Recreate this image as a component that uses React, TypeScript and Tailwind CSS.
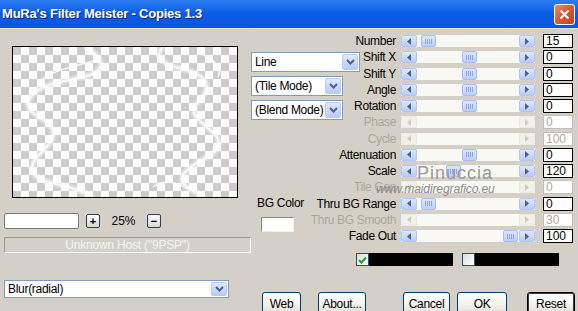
import React from "react";

const FONT = "font-['Liberation_Sans',Arial,sans-serif]";

function Chevron() {
  return (
    <svg width="9" height="6" viewBox="0 0 9 6">
      <path d="M1 1 L4.5 4.5 L8 1" fill="none" stroke="#4d6185" strokeWidth="2" />
    </svg>
  );
}

function Dropdown({ text, w, h = 20 }: { text: string; w: string; h?: number }) {
  return (
    <div
      className={`flex ${w} ${h === 20 ? "h-[20px]" : "h-[18px]"} items-center border border-[#7f9db9] bg-white pl-[3px] pr-[1px]`}
    >
      <span className="text-[12px] tracking-[-0.3px] text-black">{text}</span>
      <div
        className={`ml-auto flex ${h === 20 ? "h-[16px]" : "h-[14px]"} w-[16px] items-center justify-center rounded-[2px] border border-[#b9cbf3] bg-linear-to-b from-[#e0e9fe] to-[#b8cbf8]`}
      >
        <Chevron />
      </div>
    </div>
  );
}

function Arrow({ dir, disabled }: { dir: "l" | "r"; disabled?: boolean }) {
  return (
    <div
      className={`flex h-[12px] w-[16px] items-center justify-center rounded-[2px] border ${
        disabled
          ? "border-[#ebe9e0] bg-[#f1f0ea]"
          : "border-[#b3c6f3] bg-linear-to-b from-[#dde7fe] to-[#b9ccf9]"
      }`}
    >
      <svg width="4" height="7" viewBox="0 0 4 7">
        <path
          d={dir === "l" ? "M4 0 L0 3.5 L4 7Z" : "M0 0 L4 3.5 L0 7Z"}
          fill={disabled ? "#cfcdc2" : "#4d6185"}
        />
      </svg>
    </div>
  );
}

function Thumb() {
  return (
    <div className="flex h-[12px] w-[15px] items-center justify-center gap-[1px] rounded-[2px] border border-[#a9bdf1] bg-linear-to-b from-[#dbe5fe] to-[#bccffb]">
      <div className="h-[5px] w-px bg-[#8ea8e6]" />
      <div className="h-[5px] w-px bg-[#8ea8e6]" />
      <div className="h-[5px] w-px bg-[#8ea8e6]" />
      <div className="h-[5px] w-px bg-[#8ea8e6]" />
    </div>
  );
}

type RowProps = { label: string; value: string; thumb?: number; disabled?: boolean };

function SliderRow({ label, value, thumb, disabled }: RowProps) {
  return (
    <div className="flex h-[16.25px] items-center">
      <div
        className={`flex w-[36px] justify-end whitespace-nowrap text-[12px] tracking-[-0.35px] ${
          disabled ? "text-[#aca899]" : "text-black"
        }`}
      >
        {label}
      </div>
      <div className="relative ml-[5px] flex h-[12px] w-[134px] justify-between bg-[#f8f8f4]">
        <Arrow dir="l" disabled={disabled} />
        {thumb !== undefined && (
          <div className="absolute top-0" style={{ left: thumb }}>
            <Thumb />
          </div>
        )}
        <Arrow dir="r" disabled={disabled} />
      </div>
      <div
        className={`ml-[8px] flex h-[14px] w-[30px] items-center border bg-white pl-[2px] text-[12px] leading-[12px] ${
          disabled ? "border-[#c2bfb3] text-[#aca899]" : "border-black text-black"
        }`}
      >
        {value}
      </div>
    </div>
  );
}

function XPButton({ label, w, def }: { label: string; w: string; def?: boolean }) {
  return (
    <div
      className={`flex h-[23px] ${w} items-center justify-center rounded-[3px] border ${
        def ? "border-black shadow-[inset_0_0_0_1px_#3a3a3a]" : "border-[#003c74]"
      } bg-linear-to-b from-[#ffffff] via-[#f4f4f0] to-[#dedcd3] text-[12px] tracking-[-0.3px] text-black`}
    >
      {label}
    </div>
  );
}

function SmallBtn({ sym }: { sym: string }) {
  return (
    <div className="flex h-[14px] w-[14px] items-center justify-center rounded-[2px] border border-[#2a3f63] bg-linear-to-b from-[#ffffff] to-[#d8d7cf] text-[11px] font-bold leading-none text-black">
      {sym}
    </div>
  );
}

function Check({ checked }: { checked?: boolean }) {
  return (
    <div className="flex h-[13px] w-[13px] items-center justify-center border border-[#1c5180] bg-linear-to-br from-[#dcdcd6] to-[#ffffff]">
      {checked && (
        <svg width="9" height="8" viewBox="0 0 9 8">
          <path d="M1 4 L3.5 6.5 L8 1.5" fill="none" stroke="#21a121" strokeWidth="2" />
        </svg>
      )}
    </div>
  );
}

export default function App() {
  const rows: RowProps[] = [
    { label: "Number", value: "15", thumb: 20 },
    { label: "Shift X", value: "0", thumb: 61 },
    { label: "Shift Y", value: "0", thumb: 61 },
    { label: "Angle", value: "0", thumb: 61 },
    { label: "Rotation", value: "0", thumb: 61 },
    { label: "Phase", value: "0", disabled: true },
    { label: "Cycle", value: "100", disabled: true },
    { label: "Attenuation", value: "0", thumb: 61 },
    { label: "Scale", value: "120", thumb: 45 },
    { label: "Tile Gap", value: "0", disabled: true },
    { label: "Thru BG Range", value: "0", thumb: 20 },
    { label: "Thru BG Smooth", value: "30", disabled: true },
    { label: "Fade Out", value: "100", thumb: 102 },
  ];

  return (
    <div className={`flex h-[311px] w-[578px] flex-col overflow-hidden bg-[#d4d0c8] ${FONT}`}>
      {/* Title bar */}
      <div className="flex h-[28px] shrink-0 items-center bg-linear-to-b from-[#2d7df3] via-[#0a5ae6] to-[#0b56e0]">
        <span className="pl-[2px] text-[13px] font-bold tracking-[-0.2px] text-white [text-shadow:1px_1px_0_#0a2a7a]">
          MuRa's Filter Meister - Copies 1.3
        </span>
        <div className="ml-auto mr-[3px] flex h-[21px] w-[21px] items-center justify-center rounded-[3px] border border-white bg-linear-to-br from-[#e8876a] via-[#d55a35] to-[#c2401f]">
          <svg width="11" height="11" viewBox="0 0 11 11">
            <path d="M1.5 1.5 L9.5 9.5 M9.5 1.5 L1.5 9.5" stroke="white" strokeWidth="2" />
          </svg>
        </div>
      </div>
      <div className="h-px shrink-0 bg-[#e6e3da]" />

      {/* Main body */}
      <div className="flex h-[251px] shrink-0">
        {/* Left column */}
        <div className="flex w-[251px] flex-col pl-[4px]">
          <div className="ml-[8px] mt-[17px] h-[152px] w-[226px] border border-black bg-[conic-gradient(#ffffff_25%,#cccccc_0_50%,#ffffff_0_75%,#cccccc_0)] bg-size-[16px_16px]">
            <svg width="224" height="150" viewBox="0 0 224 150">
              <defs>
                <filter id="glow" x="-10%" y="-10%" width="120%" height="120%">
                  <feGaussianBlur stdDeviation="1.2" />
                </filter>
              </defs>
              <g fill="none" stroke="white" opacity="0.9">
                <g strokeWidth="5" filter="url(#glow)" opacity="0.7">
                  <path d="M72 0 C92 12 95 24 70 30 C40 36 20 40 15 55 C12 70 45 72 40 90 C35 105 15 110 20 125 C25 138 55 135 80 150" />
                  <path d="M150 0 C140 10 150 18 170 22 C195 28 200 40 185 55 C170 70 200 80 205 92 C210 110 180 112 170 128 C165 140 185 145 190 150" />
                </g>
                <g strokeWidth="1.5">
                  <path d="M72 0 C92 12 95 24 70 30 C40 36 20 40 15 55 C12 70 45 72 40 90 C35 105 15 110 20 125 C25 138 55 135 80 150" />
                  <path d="M80 14 C60 20 30 25 25 38" />
                  <path d="M150 0 C140 10 150 18 170 22 C195 28 200 40 185 55 C170 70 200 80 205 92 C210 110 180 112 170 128 C165 140 185 145 190 150" />
                  <path d="M140 140 C150 132 165 135 175 142" />
                  <path d="M185 5 C200 12 210 20 205 30" />
                </g>
              </g>
            </svg>
          </div>
          <div className="mt-[15px] flex h-[16px] items-center">
            <div className="h-[16px] w-[75px] rounded-[2px] border border-[#7a7a7a] bg-white" />
            <div className="ml-[7px]">
              <SmallBtn sym="+" />
            </div>
            <div className="w-[47px] text-center text-[12px] text-black">25%</div>
            <SmallBtn sym="−" />
          </div>
          <div className="mt-[8px] flex h-[16px] w-[247px] items-center justify-center border border-b-white border-l-[#9c9a92] border-r-white border-t-[#9c9a92] text-[12px] tracking-[-0.2px] text-[#f4f3ef]">
            Unknown Host ("9PSP")
          </div>
        </div>

        {/* Middle column */}
        <div className="flex w-[109px] flex-col">
          <div className="mt-[23px]">
            <Dropdown text="Line" w="w-[109px]" />
          </div>
          <div className="mt-[4px]">
            <Dropdown text="(Tile Mode)" w="w-[92px]" />
          </div>
          <div className="mt-[4px]">
            <Dropdown text="(Blend Mode)" w="w-[92px]" />
          </div>
          <div className="ml-[6px] mt-[74px] text-[12px] tracking-[-0.3px] text-black">BG Color</div>
          <div className="ml-[10px] mt-[5px] h-[15px] w-[33px] border border-b-[#f0efe9] border-l-[#8a877d] border-r-[#f0efe9] border-t-[#8a877d] bg-white" />
        </div>

        {/* Right panel */}
        <div className="relative flex flex-col pt-[4px]">
          {rows.map((r) => (
            <SliderRow key={r.label} {...r} />
          ))}
          <div className="-ml-[4px] mt-[9px] flex h-[13px] items-center">
            <Check checked />
            <div className="h-[13px] w-[84px] bg-black" />
            <div className="ml-[9px]">
              <Check />
            </div>
            <div className="h-[13px] w-[84px] bg-black" />
          </div>
          <div className="absolute left-[57px] top-[131px] text-[18px] tracking-[1px] text-[#9a9a9a]">
            Pinuccia
          </div>
          <div className="absolute left-[16px] top-[151px] text-[12px] italic tracking-[-0.1px] text-[#8c8c8c]">
            www.maidiregrafico.eu
          </div>
        </div>
      </div>

      {/* Bottom row */}
      <div className="flex items-start">
        <div className="ml-[4px]">
          <Dropdown text="Blur(radial)" w="w-[225px]" h={18} />
        </div>
        <div className="ml-[33px] mt-[12px] flex">
          <XPButton label="Web" w="w-[39px]" />
          <div className="ml-[17px]">
            <XPButton label="About..." w="w-[48px]" />
          </div>
          <div className="ml-[37px]">
            <XPButton label="Cancel" w="w-[47px]" />
          </div>
          <div className="ml-[7px]">
            <XPButton label="OK" w="w-[50px]" />
          </div>
          <div className="ml-[20px]">
            <XPButton label="Reset" w="w-[48px]" def />
          </div>
        </div>
      </div>
    </div>
  );
}
